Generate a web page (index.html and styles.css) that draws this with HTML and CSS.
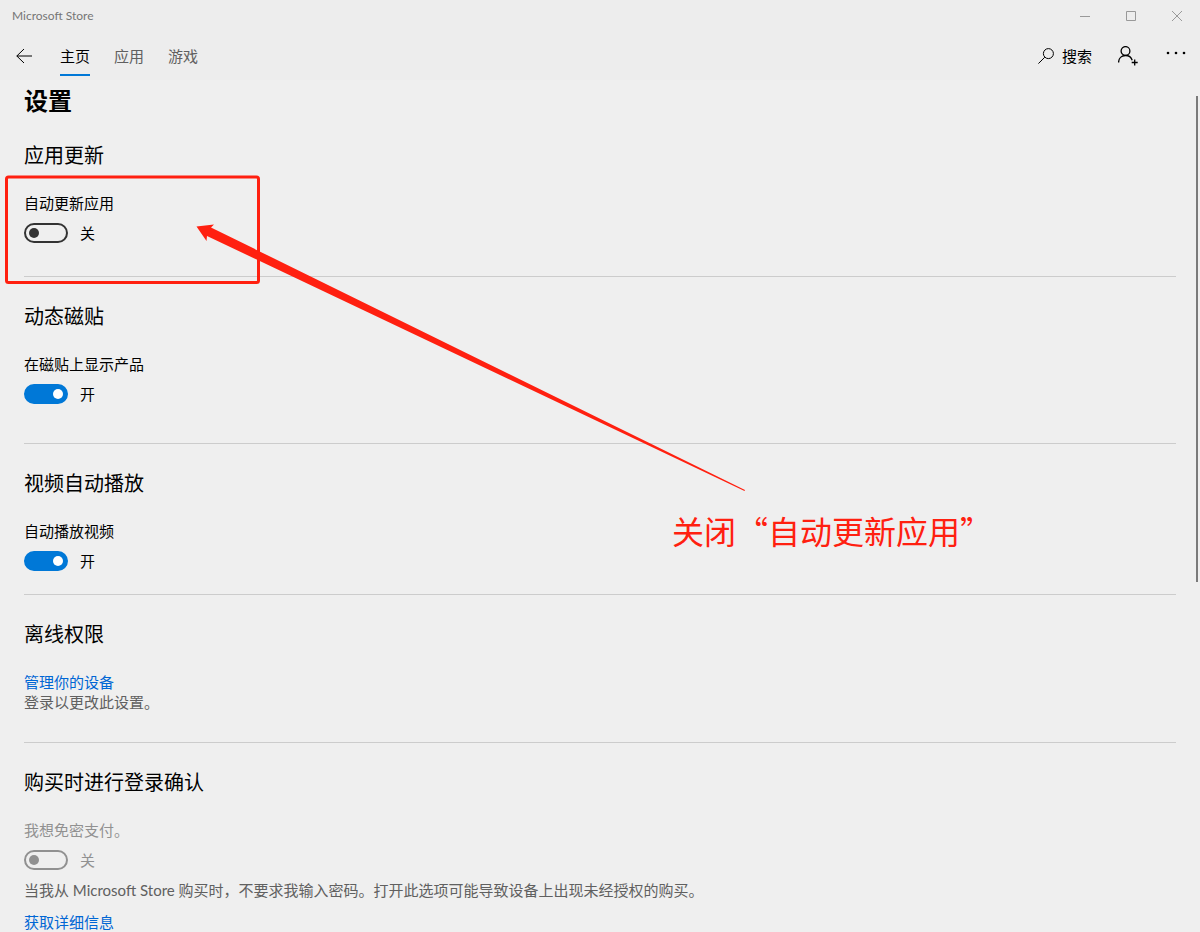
FILE: index.html
```
<!doctype html>
<html lang="zh-CN">
<head>
  <meta charset="utf-8">
  <meta name="viewport" content="width=device-width, initial-scale=1">
  <title>Microsoft Store</title>
  <link rel="stylesheet" href="styles.css">
</head>
<body>

  <header class="header">
    <div class="titlebar">
      <span class="titlebar-name">Microsoft Store</span>
      <div class="window-buttons">
        <button type="button" class="window-button" aria-label="最小化">
          <svg width="10" height="10" viewBox="0 0 10 10"><path d="M0 5.500h10"/></svg>
        </button>
        <button type="button" class="window-button" aria-label="最大化">
          <svg width="10" height="10" viewBox="0 0 10 10"><path d="M.5.500h9v9h-9z"/></svg>
        </button>
        <button type="button" class="window-button" aria-label="关闭">
          <svg width="10" height="10" viewBox="0 0 10 10"><path d="M0 0l10 10M10 0L0 10"/></svg>
        </button>
      </div>
    </div>

    <div class="navbar">
      <button type="button" class="icon-button" aria-label="返回">
        <svg width="16" height="16" viewBox="0 0 16 16"><path d="M16 8H.8M8 1L.8 8 8 15"/></svg>
      </button>
      <nav class="tabs">
        <a class="tab active" href="#">主页</a>
        <a class="tab" href="#">应用</a>
        <a class="tab" href="#">游戏</a>
      </nav>
      <div class="actions">
        <button type="button" class="icon-button search-button">
          <svg width="16" height="16" viewBox="0 0 16 16"><circle cx="10.400" cy="5.600" r="5"/><path d="M6.800 9.200L.4 15.600"/></svg>
          搜索
        </button>
        <button type="button" class="icon-button" aria-label="登录">
          <svg class="user-icon" width="20" height="20" viewBox="0 0 20 20"><circle cx="7.500" cy="5" r="4.400"/><path d="M.6 16.500c0-4.300 3-7 6.900-7 3.200 0 5.800 1.800 6.700 4.700M16.700 13.500v6M13.700 16.500h6"/></svg>
        </button>
        <button type="button" class="icon-button more-button" aria-label="更多">
          <svg class="dots-icon" width="20" height="4" viewBox="0 0 20 4"><circle cx="2" cy="2" r="1.300"/><circle cx="10" cy="2" r="1.300"/><circle cx="18" cy="2" r="1.300"/></svg>
        </button>
      </div>
    </div>
  </header>

  <main class="settings">
    <h1>设置</h1>

    <section class="group">
      <h2>应用更新</h2>
      <label for="autoUpdate">自动更新应用</label>
      <div class="switch-row">
        <input type="checkbox" class="switch" id="autoUpdate">
        <span>关</span>
      </div>
    </section>

    <section class="group group-tall">
      <h2>动态磁贴</h2>
      <label for="liveTile">在磁贴上显示产品</label>
      <div class="switch-row">
        <input type="checkbox" class="switch" id="liveTile" checked>
        <span>开</span>
      </div>
    </section>

    <section class="group group-short">
      <h2>视频自动播放</h2>
      <label for="autoPlay">自动播放视频</label>
      <div class="switch-row">
        <input type="checkbox" class="switch" id="autoPlay" checked>
        <span>开</span>
      </div>
    </section>

    <section class="group group-text">
      <h2>离线权限</h2>
      <a class="link" href="#">管理你的设备</a>
      <p class="note">登录以更改此设置。</p>
    </section>

    <section class="group">
      <h2>购买时进行登录确认</h2>
      <label class="disabled" for="noPassword">我想免密支付。</label>
      <div class="switch-row disabled">
        <input type="checkbox" class="switch" id="noPassword" disabled>
        <span>关</span>
      </div>
      <p class="note purchase-note">当我从 Microsoft Store 购买时，不要求我输入密码。打开此选项可能导致设备上出现未经授权的购买。</p>
      <a class="link" href="#">获取详细信息</a>
    </section>

    <div class="scroll-thumb"></div>
  </main>

  <!-- red callout drawn over the page -->
  <div class="callout">
    <svg width="760" height="500" viewBox="0 0 760 500">
      <rect x="6.500" y="177" width="252" height="105.500" rx="2"/>
      <path d="M196.500 226.500L214 224.500l-3 3L745 490l-.5 1L207 236l-.5 5z"/>
    </svg>
    <p class="callout-text">关闭“自动更新应用”</p>
  </div>

</body>
</html>
```

FILE: styles.css
```
* {
  box-sizing: border-box;
}

html, body {
  height: 100%;
  margin: 0;
}

body {
  position: relative;
  display: flex;
  flex-direction: column;
  overflow: hidden;
  background-color: #efefef;
  color: #000;
  font-family: Lato, "Noto Sans CJK SC", sans-serif;
  font-size: 15px;
  line-height: 20px;
}

h1, h2, p {
  margin: 0;
}

a {
  text-decoration: none;
}

button {
  padding: 0;
  border: 0;
  background: none;
  color: inherit;
  font: inherit;
}

svg {
  display: block;
  fill: none;
  stroke: currentColor;
}

/* header */
.header {
  flex: none;
  background-color: #ededed;
}

.titlebar {
  display: flex;
  justify-content: space-between;
  align-items: center;
  height: 32px;
  padding-left: 12px;
  color: #767676;
  font-size: 12px;
}

.window-buttons {
  display: flex;
}

.window-button {
  display: flex;
  justify-content: center;
  align-items: center;
  width: 46px;
  height: 32px;
  color: #999;
}

.navbar {
  display: flex;
  align-items: center;
  height: 48px;
  padding: 0 14px 0 16px;
}

.icon-button {
  display: flex;
  align-items: center;
}

.tabs {
  display: flex;
  gap: 24px;
  margin-left: 28px;
}

.tab {
  height: 40px;
  padding-top: 10px;
  border-bottom: 2px solid transparent;
  color: #606060;
}

.tab.active {
  border-bottom-color: #0078d7;
  color: #000;
}

.actions {
  display: flex;
  align-items: center;
  gap: 26px;
  margin-left: auto;
}

.search-button {
  gap: 8px;
}

.more-button {
  height: 20px;
  align-items: flex-start;
  margin-left: 2px;
  padding-top: 5px;
}

.user-icon {
  stroke-width: 1.3;
}

.dots-icon {
  fill: currentColor;
  stroke: none;
}

/* settings */
.settings {
  position: relative;
  flex: 1;
  min-height: 0;
  overflow: hidden;
  padding: 5px 24px 0;
}

h1 {
  margin-bottom: 24px;
  font-size: 24px;
  line-height: 32px;
}

h2 {
  margin-bottom: 24px;
  font-size: 20px;
  font-weight: normal;
  line-height: 28px;
}

.group {
  padding-bottom: 33px;
}

.group-tall {
  padding-bottom: 39px;
}

.group-short {
  padding-bottom: 23px;
}

.group-text {
  padding-bottom: 30px;
}

.group + .group {
  padding-top: 25px;
  border-top: 1px solid #ccc;
}

label, .link {
  display: block;
  width: fit-content;
}

.switch-row {
  display: flex;
  align-items: center;
  gap: 12px;
  margin-top: 10px;
}

.switch {
  appearance: none;
  display: flex;
  align-items: center;
  width: 44px;
  height: 20px;
  margin: 0;
  padding: 0 3px;
  border: 2px solid #333;
  border-radius: 10px;
}

.switch::before {
  content: "";
  width: 10px;
  height: 10px;
  border-radius: 50%;
  background-color: #333;
}

.switch:checked {
  justify-content: flex-end;
  border-color: #0078d7;
  background-color: #0078d7;
}

.switch:checked::before {
  background-color: #fff;
}

.switch:disabled {
  border-color: #919191;
}

.switch:disabled::before {
  background-color: #919191;
}

.disabled {
  color: #919191;
}

.link {
  color: #0066d4;
}

.note {
  color: #606060;
}

.purchase-note {
  margin: 10px 0 12px;
}

.scroll-thumb {
  position: absolute;
  top: 16px;
  right: 2px;
  width: 2px;
  height: 57%;
  background-color: #7a7a7a;
}

/* callout */
.callout {
  position: absolute;
  top: 0;
  left: 0;
  color: #ff2010;
  pointer-events: none;
}

.callout rect {
  stroke-width: 3;
}

.callout path {
  fill: currentColor;
  stroke: none;
}

.callout-text {
  margin: 6px 0 0 672px;
  font-family: "Noto Sans CJK SC", sans-serif;
  font-size: 32px;
  line-height: 48px;
  white-space: nowrap;
}
```
